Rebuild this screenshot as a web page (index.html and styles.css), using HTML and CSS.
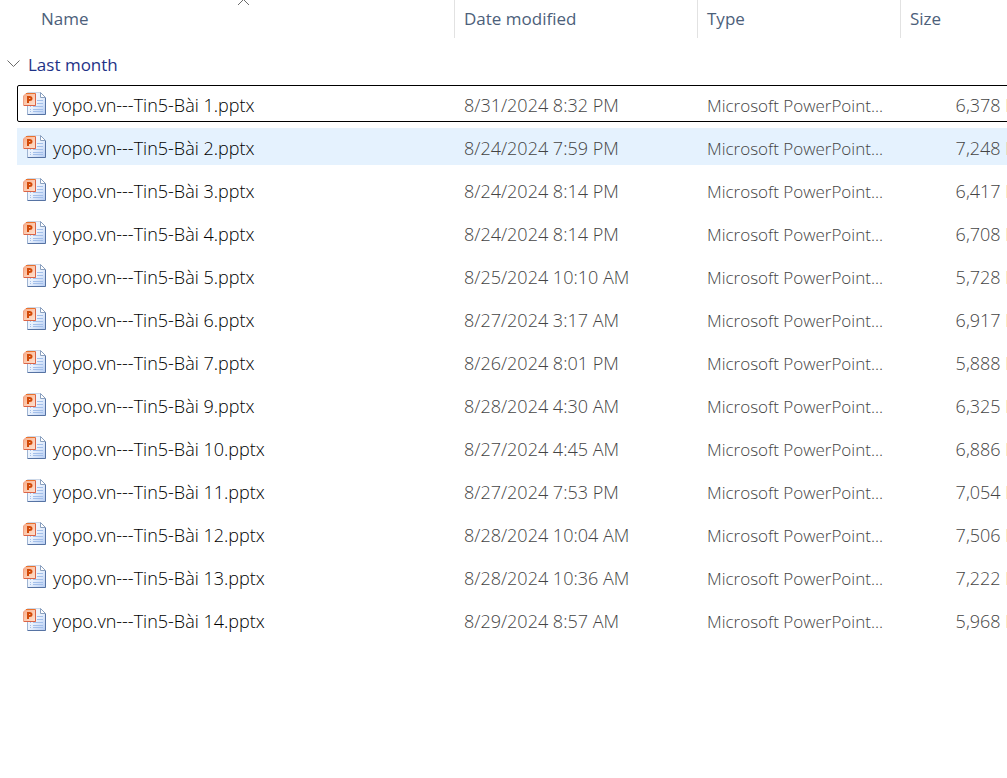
FILE: index.html
```html
<!DOCTYPE html>
<html lang="en">
<head>
<meta charset="utf-8">
<meta name="viewport" content="width=device-width, initial-scale=1">
<title>Files</title>
<link rel="stylesheet" href="styles.css">
</head>
<body>
<svg class="defs" aria-hidden="true">
  <defs>
    <linearGradient id="paper" x1="0" y1="0" x2="1" y2="1">
      <stop offset="0" stop-color="#f4f8fe"/><stop offset=".5" stop-color="#eaf2fd"/><stop offset="1" stop-color="#b4cbf2"/>
    </linearGradient>
    <linearGradient id="badge" x1="0" y1="0" x2="1" y2="1">
      <stop offset="0" stop-color="#f8aa84"/><stop offset=".5" stop-color="#fcc9ae"/><stop offset="1" stop-color="#fde3d3"/>
    </linearGradient>
    <symbol id="pptx" viewBox="0 0 23 23">
      <path d="M4.500 .5H17.500L22.500 5.500V22.500H4.500Z" fill="url(#paper)" stroke="#cdd8e8"/>
      <path d="M22.500 5.500V22.500H4.500" fill="none" stroke="#5673a3"/>
      <path d="M4.500 14V22" stroke="#9fb4d2"/>
      <path d="M17.500 .5V5.500H22.500Z" fill="#fff" stroke="#8aa0bf"/>
      <path d="M14 8.500H20M14 11.500H20M10 14.500H20M10 17.500H20M10 19.500H20" stroke="#a3bfea"/>
      <path d="M7 14.500H8M7 17.500H8M7 19.500H8" stroke="#a3bfea"/>
      <path d="M3 1.500H12.500V13.500H.5V4Z" fill="url(#badge)" stroke="#f0a285"/>
      <path d="M12.500 1.500V13.500H1" fill="none" stroke="#dc6446"/>
      <path d="M3 1.500H12" stroke="#e9722e"/>
      <path d="M5 11V5H6.500Q8.500 5 8.500 6.500T6.500 8H5" fill="none" stroke="#d24a08" stroke-width="2"/>
    </symbol>
  </defs>
</svg>
<main class="pane">
<table class="files">
  <thead>
    <tr class="line head">
      <th scope="col" class="col-name" aria-sort="ascending"><button type="button">Name</button><svg class="sort" viewBox="0 0 11 5" aria-hidden="true"><path d="M0 5L5.500 -.5L11 5"/></svg></th>
      <th scope="col"><button type="button">Date modified</button></th>
      <th scope="col"><button type="button">Type</button></th>
      <th scope="col"><button type="button">Size</button></th>
    </tr>
  </thead>
  <tbody class="group">
    <tr><th colspan="4" scope="rowgroup"><button type="button" class="toggle" aria-expanded="true"><svg class="chevron" viewBox="0 0 13 7" aria-hidden="true"><path d="M.5 .5L6.500 6.500L12.500 .5"/></svg>Last month</button></th></tr>
  </tbody>
  <tbody class="rows" id="rows"></tbody>
</table>
</main>
<script src="files.js"></script>
</body>
</html>
```
FILE: files.js
```js
const files = [
  [1, "8/31/2024 8:32 PM", "6,378 KB"],
  [2, "8/24/2024 7:59 PM", "7,248 KB"],
  [3, "8/24/2024 8:14 PM", "6,417 KB"],
  [4, "8/24/2024 8:14 PM", "6,708 KB"],
  [5, "8/25/2024 10:10 AM", "5,728 KB"],
  [6, "8/27/2024 3:17 AM", "6,917 KB"],
  [7, "8/26/2024 8:01 PM", "5,888 KB"],
  [9, "8/28/2024 4:30 AM", "6,325 KB"],
  [10, "8/27/2024 4:45 AM", "6,886 KB"],
  [11, "8/27/2024 7:53 PM", "7,054 KB"],
  [12, "8/28/2024 10:04 AM", "7,506 KB"],
  [13, "8/28/2024 10:36 AM", "7,222 KB"],
  [14, "8/29/2024 8:57 AM", "5,968 KB"]
];
const state = { 1: " focused", 2: " hovered" };
document.getElementById("rows").innerHTML = files.map(([n, date, size]) => `
  <tr class="line file${state[n] || ""}">
    <td class="name"><svg class="icon" aria-hidden="true"><use href="#pptx"/></svg><span>yopo.vn---Tin5-Bài ${n}.pptx</span></td>
    <td class="date">${date}</td>
    <td>Microsoft PowerPoint...</td>
    <td class="size">${size}</td>
  </tr>`).join("");
```
FILE: styles.css
```css
* { box-sizing: border-box; }

body {
  margin: 0;
  background: #fff;
  color: #444;
  font: 300 17px/24px "Open Sans", "Noto Sans", sans-serif;
}

.defs { position: absolute; width: 0; height: 0; }

.pane { min-height: 100vh; padding-left: 17px; overflow: hidden; }

/* The size column runs past the right edge of the pane. */
.files { display: block; margin-right: -30px; }
.files thead { display: block; }

.line {
  display: grid;
  grid-template-columns: 1fr 243px 203px 137px;
  align-items: center;
}

th, td { padding: 0; text-align: left; font-weight: inherit; white-space: nowrap; }

button {
  padding: 0;
  border: 0;
  background: none;
  color: inherit;
  font: inherit;
}

.head { color: #4c607a; font-weight: 400; }
.head th { height: 38px; padding-left: 9px; border-left: 1px solid #e2e2e2; }
.head th button { height: 38px; }
.head .col-name { position: relative; margin-left: 15px; border-left: 0; }

.sort {
  position: absolute;
  top: 0;
  left: 50%;
  width: 11px;
  height: 5px;
  margin-left: -5px;
}

.sort path, .chevron path { fill: none; stroke: #6b6b6b; }

.group, .group tr, .group th { display: block; }
.group { font-weight: 400; }
.group th { height: 47px; padding-top: 6px; }

.toggle {
  display: flex;
  align-items: center;
  gap: 8px;
  height: 41px;
  margin-left: -10px;
  color: #1e3287;
}

.chevron { width: 13px; height: 7px; margin-bottom: 2px; }

.rows { display: flex; flex-direction: column; gap: 6px; }

.file { height: 37px; }
.file td { padding: 4px 0 0 10px; }
.file .name { display: flex; align-items: center; gap: 7px; padding: 0 0 0 6px; color: #000; font-size: 18px; }
.file .name span { padding-top: 2px; }
.file .date, .file .size { padding-top: 2px; font-size: 18px; }
.file .size { padding-right: 10px; text-align: right; }
.icon { width: 23px; height: 23px; }

.focused { outline: 1px solid #000; outline-offset: -1px; border-radius: 2px; }
.hovered { background: #e5f2fe; }
```
